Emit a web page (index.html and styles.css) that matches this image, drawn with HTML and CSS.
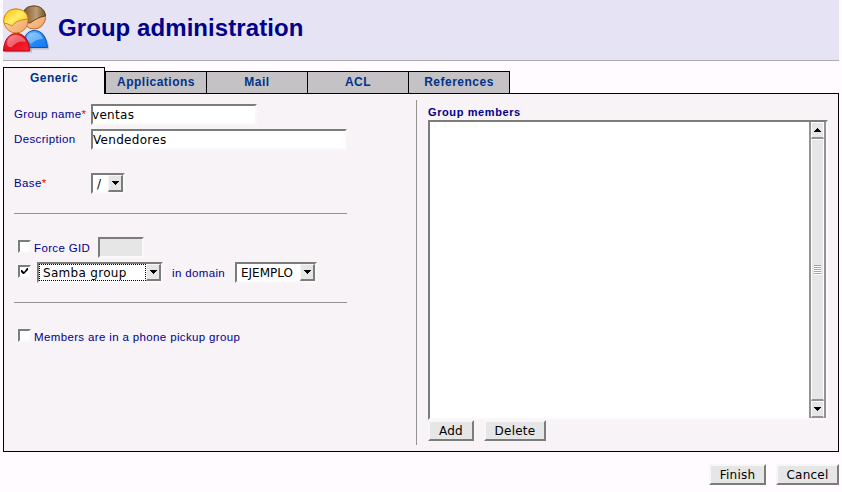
FILE: index.html
```html
<!DOCTYPE html>
<html lang="en">
<head>
<meta charset="utf-8">
<title>Group administration</title>
<link rel="stylesheet" href="styles.css">
</head>
<body>
<header class="header">
  <svg class="logo" width="48" height="50" viewBox="0 0 48 50">
    <defs>
      <linearGradient id="skin" x2="1" y2="1"><stop offset="0" stop-color="#ffe0bb"/><stop offset="1" stop-color="#efa260"/></linearGradient>
      <linearGradient id="brown" x2="1"><stop offset="0" stop-color="#765026"/><stop offset=".6" stop-color="#bd9d74"/><stop offset="1" stop-color="#765026"/></linearGradient>
      <linearGradient id="blond" x2="1" y2="1"><stop offset="0" stop-color="#ffb900"/><stop offset=".5" stop-color="#ffee69"/><stop offset="1" stop-color="#ffb900"/></linearGradient>
      <linearGradient id="red" x2="1" y2="1"><stop offset="0" stop-color="#ff5961"/><stop offset=".5" stop-color="#e80c1c"/><stop offset="1" stop-color="#ff2834"/></linearGradient>
      <linearGradient id="blue" x2="1" y2="1"><stop offset="0" stop-color="#76bfff"/><stop offset=".5" stop-color="#238cf7"/><stop offset="1" stop-color="#1677f0"/></linearGradient>
    </defs>
    <path d="M22 44.500H46V41C44 32 39 26 32 26S21 32 20 44z" fill="#777" opacity=".35"/>
    <path d="M20 42.500H44.500C43.500 32 39 25.500 31.500 25.500S20 32 20 42.500z" fill="url(#blue)" stroke="#0753b5"/>
    <path d="M24 35Q23 28 31 27.500Q38 27 40 34Q33 34 28 39z" fill="#fff" opacity=".35"/>
    <circle cx="31" cy="12.500" r="11.500" fill="url(#skin)" stroke="#b86b2a"/>
    <path d="M19.500 12C20 4 24 1 31 1s11 4 11.500 10C36 12 33 14 27 18Q22 18 19.500 12z" fill="url(#brown)" stroke="#63401d"/>
    <path d="M2 47.500H29V45C27 34 22 30 15 30S3 35 2 47.500z" fill="#666" opacity=".35"/>
    <path d="M.500 46H26.500C26 35 21 28.500 13.500 28.500S1 35 .500 46z" fill="url(#red)" stroke="#b00012"/>
    <path d="M4 38Q5 30 13 30Q20 30 23 37Q15 35 9 42Q4 43 4 38z" fill="#fff" opacity=".35"/>
    <circle cx="13" cy="16" r="12" fill="url(#skin)" stroke="#d57a20"/>
    <path d="M.700 18C.500 9 5 4 13 4s11.500 5 12 10C17 15 13 16 9 21Q4 18 .700 18z" fill="url(#blond)" stroke="#d98300"/>
  </svg>
  <h1 class="title">Group administration</h1>
</header>

<nav class="tabs">
  <a class="tab tab-active">Generic</a>
  <a class="tab">Applications</a>
  <a class="tab">Mail</a>
  <a class="tab">ACL</a>
  <a class="tab">References</a>
</nav>

<main class="panel">
  <section class="left">
    <div class="row">
      <label class="name">Group name<span class="req">*</span></label>
      <div class="field field-name">ventas</div>
    </div>
    <div class="row row-description">
      <label class="name">Description</label>
      <div class="field field-description">Vendedores</div>
    </div>
    <div class="row row-base">
      <label class="name">Base<span class="req">*</span></label>
      <div class="field select select-base"><span class="value">/</span><span class="drop"><svg width="7" height="4"><path d="M0 0H7V1H6V2H5V3H4V4H3V3H2V2H1V1H0z"/></svg></span></div>
    </div>
    <div class="rule"></div>
    <div class="row row-gid">
      <span class="check"></span>
      <label class="gid">Force GID</label>
      <div class="field field-gid"></div>
    </div>
    <div class="row row-samba">
      <span class="check"><svg width="7" height="7"><path d="M0 2H1L3 4L6 0H7V2L3 6H2L0 4z"/></svg></span>
      <div class="field select select-samba"><span class="value focused">Samba group</span><span class="drop"><svg width="7" height="4"><path d="M0 0H7V1H6V2H5V3H4V4H3V3H2V2H1V1H0z"/></svg></span></div>
      <label class="domain">in domain</label>
      <div class="field select select-domain"><span class="value">EJEMPLO</span><span class="drop"><svg width="7" height="4"><path d="M0 0H7V1H6V2H5V3H4V4H3V3H2V2H1V1H0z"/></svg></span></div>
    </div>
    <div class="rule rule-second"></div>
    <div class="row row-phone">
      <span class="check"></span>
      <label>Members are in a phone pickup group</label>
    </div>
  </section>

  <section class="right">
    <h2 class="caption">Group members</h2>
    <div class="list">
      <div class="scrollbar">
        <span class="arrow"><svg width="7" height="4"><path d="M3 0H4V1H5V2H6V3H7V4H0V3H1V2H2V1H3z"/></svg></span>
        <span class="thumb"><span class="grip"></span></span>
        <span class="arrow"><svg width="7" height="4"><path d="M0 0H7V1H6V2H5V3H4V4H3V3H2V2H1V1H0z"/></svg></span>
      </div>
    </div>
    <div class="actions">
      <button class="btn btn-add">Add</button>
      <button class="btn btn-delete">Delete</button>
    </div>
  </section>
</main>

<footer class="footer">
  <button class="btn btn-finish">Finish</button>
  <button class="btn btn-cancel">Cancel</button>
</footer>
</body>
</html>
```

FILE: styles.css
```css
* { box-sizing: border-box; }
body {
  margin: 0;
  height: 492px;
  overflow: hidden;
  background: #fffbff;
  font: 11.5px/14px "Liberation Sans", Arial, sans-serif;
  letter-spacing: .36px;
  color: #00008b;
}
svg { display: block; flex: none; }
.header {
  display: flex;
  height: 61px;
  margin: 0 3px 6px;
  background: #e6e3f5;
  border-bottom: 1px solid #b0adb2;
}
.logo { margin-top: 5px; }
.title {
  margin: 13px 0 0 7px;
  font-size: 24px;
  line-height: 29px;
  letter-spacing: .07px;
}
.tabs {
  display: flex;
  align-items: flex-end;
  height: 27px;
  margin: 0 3px -1px;
  position: relative;
}
.tab {
  width: 101px;
  height: 23px;
  border: solid #000;
  border-width: 1px 1px 1px 0;
  background: #c5c2c5;
  color: #003388;
  font-size: 12px;
  font-weight: bold;
  line-height: 21px;
  letter-spacing: .5px;
  text-align: center;
}
.tab-active {
  width: 102px;
  height: 27px;
  border-width: 1px 1px 0 1px;
  background: #f7f3f7;
}
.tab-active + .tab { width: 102px; border-left-width: 1px; }
.panel {
  display: flex;
  height: 359px;
  margin: 0 3px;
  border: 1px solid #000;
  background: #f7f3f7;
}
.left { width: 412px; padding: 10px 0 0 10px; }
.row { display: flex; align-items: center; height: 21px; white-space: nowrap; }
.row-description { margin-top: 4px; }
.row-base { margin-top: 23px; }
.name { width: 77px; padding-bottom: 1px; }
.req { color: #f00; }
.field {
  height: 21px;
  border: 2px solid;
  border-color: #7b7d7b #faf8fa #faf8fa #7b7d7b;
  background: #fff;
  color: #000;
  font: 12px/19px "DejaVu Sans", sans-serif;
  letter-spacing: .3px;
}
.field-name { width: 166px; text-indent: -1px; }
.field-description { width: 256px; }
.field-gid { width: 46px; margin-left: 9px; background: #e6e6e6; }
.select { display: flex; }
.value { flex: 1; padding-left: 4px; }
.focused { border: 1px dotted #000; padding-left: 3px; line-height: 17px; }
.select-base { width: 34px; }
.select-samba { width: 126px; margin-left: 6px; }
.select-domain { width: 82px; margin-left: 9px; letter-spacing: 0; }
.domain { margin-left: 9px; width: 54px; }
.drop {
  display: flex;
  align-items: center;
  justify-content: center;
  width: 15px;
  border: solid;
  border-width: 1px 2px 2px 1px;
  border-color: #f6f6f6 #7b7d7b #7b7d7b #f6f6f6;
  background: #e6e6e6;
}
.drop svg { margin-bottom: 1px; }
.rule { width: 333px; height: 1px; margin-top: 19px; background: #949294; }
.row-gid { margin-top: 23px; }
.row-samba { margin-top: 4px; }
.row-phone { margin-top: 23px; }
.check {
  display: flex;
  align-items: center;
  justify-content: center;
  flex: none;
  width: 13px;
  height: 13px;
  margin: 0 0 2px 4px;
  border: 2px solid;
  border-color: #7b7d7b #faf8fa #faf8fa #7b7d7b;
  background: #fff;
}
.check + label { margin-left: 3px; }
.gid { width: 55px; }
.right {
  width: 412px;
  height: 345px;
  margin-top: 6px;
  padding: 5px 0 0 11px;
  border-left: 1px solid #949294;
}
.caption { margin: 0 0 1px; font-size: 11px; line-height: 14px; letter-spacing: .6px; }
.list {
  display: flex;
  justify-content: flex-end;
  width: 400px;
  height: 300px;
  border: 2px solid;
  border-color: #7b7d7b #faf8fa #faf8fa #7b7d7b;
  background: #fff;
}
.scrollbar {
  display: flex;
  flex-direction: column;
  width: 17px;
  border: solid #949294;
  border-width: 0 2px;
}
.arrow, .thumb {
  display: flex;
  align-items: center;
  justify-content: center;
  border: 1px solid #fff;
  border-bottom: 2px solid #949294;
  background: #e6e6e6;
}
.arrow { height: 17px; }
.thumb { flex: 1; }
.grip {
  width: 7px;
  height: 10px;
  background: repeating-linear-gradient(#a4a2a4 0 1px, #fff 1px 2px);
}
.actions { display: flex; gap: 10px; }
.btn {
  height: 21px;
  padding: 0;
  border: 2px solid;
  border-color: #f8f6f8 #7b7d7b #7b7d7b #f8f6f8;
  background: #e6e6e6;
  color: #000;
  font: 12px/18px "DejaVu Sans", sans-serif;
  letter-spacing: .25px;
}
.btn-add { width: 46px; }
.btn-delete { width: 62px; }
.btn-finish { width: 57px; }
.btn-cancel { width: 63px; }
.footer { display: flex; justify-content: flex-end; gap: 10px; margin: 12px 3px 0; }
```
